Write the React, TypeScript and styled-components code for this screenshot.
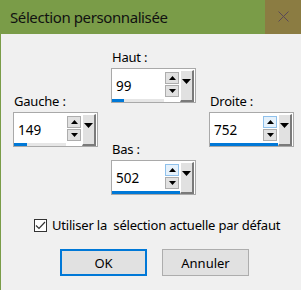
import React from 'react';
import styled, { createGlobalStyle } from 'styled-components';

const GlobalStyle = createGlobalStyle`
  html, body {
    margin: 0;
    padding: 0;
    background: #f0f0f0;
  }
  body {
    font-family: 'Noto Sans', 'Liberation Sans', sans-serif;
    color: #000;
  }
`;

const Window = styled.div`
  width: 300px;
  height: 290px;
  border-left: 1px solid #7a9c48;
  background: #f0f0f0;
  display: flex;
  flex-direction: column;
  overflow: hidden;
`;

const TitleBar = styled.div`
  height: 34px;
  flex-shrink: 0;
  display: flex;
  align-items: center;
  background: #7a9c48;
  margin-left: -1px;
`;

const Title = styled.div`
  flex: 1;
  padding-left: 10px;
  font-size: 15px;
  letter-spacing: -0.4px;
  color: #111;
  padding-bottom: 1px;
`;

const CloseButton = styled.div`
  width: 36px;
  height: 34px;
  background: #8b7c42;
  display: flex;
  align-items: center;
  justify-content: center;
  padding-bottom: 2px;
  box-sizing: border-box;
`;

const Body = styled.div`
  display: flex;
  flex-direction: column;
  padding: 0 0 0 12px;
`;

const Fields = styled.div`
  display: flex;
  gap: 13px;
`;

const Column = styled.div<{ $top: number; $gap?: number }>`
  display: flex;
  flex-direction: column;
  padding-top: ${(p) => p.$top}px;
  gap: ${(p) => p.$gap ?? 0}px;
`;

const Field = styled.div`
  display: flex;
  flex-direction: column;
`;

const Label = styled.div`
  font-size: 13px;
  letter-spacing: -0.2px;
  line-height: 16px;
  height: 16px;
  margin-bottom: 3px;
  padding-left: 1px;
`;

const SpinBox = styled.div`
  width: 85px;
  height: 35px;
  box-sizing: border-box;
  border: 1px solid #a9a9a9;
  background: #fff;
  display: flex;
`;

const SpinMain = styled.div`
  width: 67px;
  display: flex;
  flex-direction: column;
`;

const SpinRow = styled.div`
  flex: 1;
  display: flex;
`;

const Value = styled.div`
  flex: 1;
  font-size: 13.5px;
  line-height: 16px;
  padding: 9px 0 0 4px;
`;

const Arrows = styled.div`
  display: flex;
  flex-direction: column;
  gap: 1px;
  padding-top: 3px;
`;

const ArrowButton = styled.div<{ $hot?: boolean }>`
  width: 14px;
  height: 12px;
  box-sizing: border-box;
  border: 1px solid ${(p) => (p.$hot ? '#8fc1ec' : '#adadad')};
  background: ${(p) => (p.$hot ? '#e5f1fb' : '#e1e1e1')};
  display: flex;
  align-items: center;
  justify-content: center;
`;

const Bar = styled.div`
  width: 52px;
  height: 3px;
  margin: 2px 0 1px 0;
  background: #e6e6e6;
`;

const BarFill = styled.div`
  height: 3px;
  background: #0078d7;
`;

const DropButton = styled.div`
  width: 14px;
  margin: 1px 0 0 1px;
  box-sizing: border-box;
  background: #e1e1e1;
  border-top: 1px solid #fff;
  border-left: 1px solid #fff;
  border-right: 2px solid #7a7a7a;
  border-bottom: 2px solid #7a7a7a;
  display: flex;
  justify-content: center;
  padding-top: 8px;
`;

const CheckRow = styled.div`
  display: flex;
  align-items: center;
  gap: 5px;
  margin: 22px 0 0 21px;
  font-size: 13px;
  letter-spacing: -0.2px;
  white-space: pre;
  line-height: 16px;
`;

const CheckBox = styled.div`
  width: 13px;
  height: 13px;
  box-sizing: border-box;
  border: 1px solid #333;
  background: #fff;
  display: flex;
  align-items: center;
  justify-content: center;
`;

const Buttons = styled.div`
  display: flex;
  gap: 15px;
  margin: 16px 0 0 47px;
`;

const Button = styled.div<{ $primary?: boolean }>`
  width: 87px;
  height: 27px;
  box-sizing: border-box;
  border: ${(p) => (p.$primary ? '2px solid #0078d7' : '1px solid #adadad')};
  background: #e1e1e1;
  display: flex;
  align-items: center;
  justify-content: center;
  font-size: 13px;
`;

const Triangle = ({ up, w }: { up?: boolean; w: number }) => (
  <svg width={w} height={Math.ceil(w / 2)} viewBox={`0 0 ${w} ${Math.ceil(w / 2)}`}>
    {up ? (
      <polygon points={`0,${Math.ceil(w / 2)} ${w},${Math.ceil(w / 2)} ${w / 2},0`} fill="#000" />
    ) : (
      <polygon points={`0,0 ${w},0 ${w / 2},${Math.ceil(w / 2)}`} fill="#000" />
    )}
  </svg>
);

type Spin = { label: string; value: number; fill: number; hot?: boolean };

const SpinField = ({ label, value, fill, hot }: Spin) => (
  <Field>
    <Label>{label}</Label>
    <SpinBox>
      <SpinMain>
        <SpinRow>
          <Value>{value}</Value>
          <Arrows>
            <ArrowButton $hot={hot}>
              <Triangle up w={7} />
            </ArrowButton>
            <ArrowButton>
              <Triangle w={7} />
            </ArrowButton>
          </Arrows>
        </SpinRow>
        <Bar>
          <BarFill style={{ width: fill }} />
        </Bar>
      </SpinMain>
      <DropButton>
        <Triangle w={9} />
      </DropButton>
    </SpinBox>
  </Field>
);

const App = () => {
  return (
    <>
      <GlobalStyle />
      <Window>
        <TitleBar>
          <Title>Sélection personnalisée</Title>
          <CloseButton>
            <svg width="11" height="11" viewBox="0 0 11 11">
              <path d="M0.5 0.5 L10.5 10.5 M10.5 0.5 L0.5 10.5" stroke="#5a4858" strokeWidth="1" />
            </svg>
          </CloseButton>
        </TitleBar>
        <Body>
          <Fields>
            <Column $top={59}>
              <SpinField label="Gauche :" value={149} fill={13} />
            </Column>
            <Column $top={15} $gap={38}>
              <SpinField label="Haut :" value={99} fill={12} />
              <SpinField label="Bas :" value={502} fill={68} hot />
            </Column>
            <Column $top={59}>
              <SpinField label="Droite :" value={752} fill={68} hot />
            </Column>
          </Fields>
          <CheckRow>
            <CheckBox>
              <svg width="11" height="9" viewBox="0 0 11 9">
                <path d="M1 4.5 L4 7.5 L10 1" stroke="#333" strokeWidth="1.2" fill="none" />
              </svg>
            </CheckBox>
            <span>Utiliser la  sélection actuelle par défaut</span>
          </CheckRow>
          <Buttons>
            <Button $primary>OK</Button>
            <Button>Annuler</Button>
          </Buttons>
        </Body>
      </Window>
    </>
  );
};

export default App;
